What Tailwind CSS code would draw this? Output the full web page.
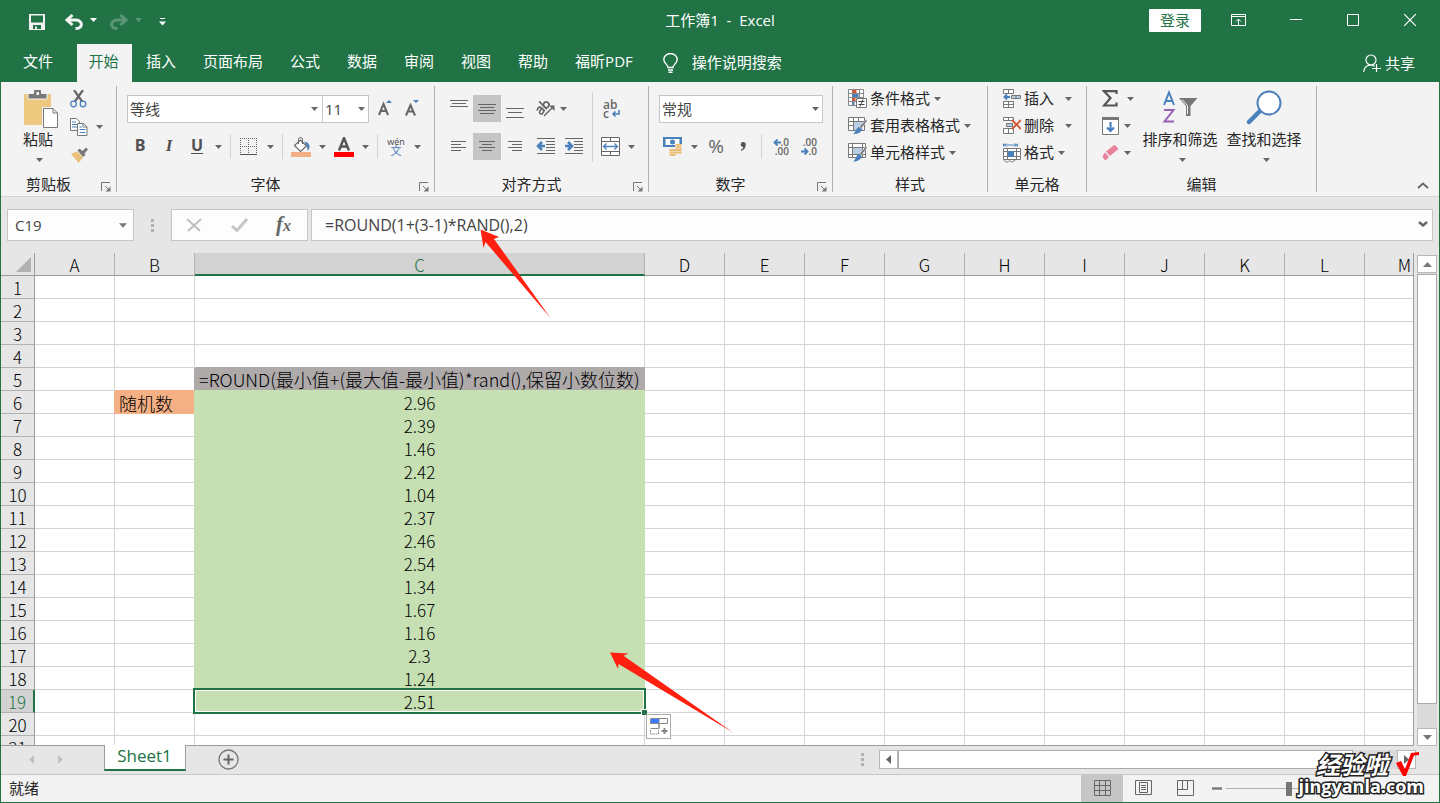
<!DOCTYPE html>
<html lang="zh-CN">
<head>
<meta charset="utf-8">
<title>工作簿1 - Excel</title>
<script src="https://cdn.jsdelivr.net/npm/@tailwindcss/browser@4"></script>
</head>
<body class="h-screen overflow-hidden bg-[#e6e6e6] font-['Open_Sans','Noto_Sans_CJK_SC',sans-serif] text-[15px] leading-5 text-[#262626]">

<svg class="hidden" aria-hidden="true">
  <symbol id="caret" viewBox="0 0 7 4"><path d="M0 0h7L3.500 4z" fill="currentColor"/></symbol>
  <symbol id="launch" viewBox="0 0 10 10"><path d="M.5 9V.5H9M4 4l4 4" fill="none" stroke="#777"/><path d="M9.500 4.500v5h-5z" fill="#777"/></symbol>
</svg>

<div class="flex h-full flex-col border-x border-b border-[#217346]">

  <!-- Title bar -->
  <header class="relative flex h-11 shrink-0 items-center bg-[#217346] text-white">
    <button class="ml-7 flex" aria-label="保存"><svg class="size-4" viewBox="0 0 16 16"><path d="M0 0h16v16H0zM2 1.500v7h12v-7zM4 11v4h2v-2.500h2V15h4v-4z" fill="#f2f2f2" fill-rule="evenodd"/></svg></button>
    <button class="ml-5 flex" aria-label="撤消"><svg class="h-4 w-[18px]" viewBox="0 0 18 16"><path d="M7.500 1L2 6l5.500 5M3 6h8c7 .5 7.500 8.500-.5 8.500" fill="none" stroke="#f2f2f2" stroke-width="3"/></svg></button>
    <svg class="mb-1 ml-[7px] h-[4px] w-[7px]"><use href="#caret"/></svg>
    <button class="ml-[13px] flex" aria-label="恢复"><svg class="h-4 w-[18px]" viewBox="0 0 18 16"><path d="M10.500 1L16 6l-5.500 5M15 6H7C0 6.500-.5 14.500 7.500 14.500" fill="none" stroke="#5a9677" stroke-width="3"/></svg></button>
    <svg class="mb-1 ml-[7px] h-[4px] w-[7px] text-[#5a9677]"><use href="#caret"/></svg>
    <button class="ml-[17px] flex" aria-label="自定义快速访问工具栏"><svg class="h-2 w-[7px]" viewBox="0 0 7 8"><path d="M1 .5h5" stroke="#fff" fill="none"/><path d="M0 3.500h7L3.500 7.500z" fill="#fff"/></svg></button>
    <h1 class="absolute inset-x-0 top-[10px] text-center whitespace-pre">工作簿1  -  Excel</h1>
    <div class="relative ml-auto flex items-center">
      <button class="h-[23px] w-[52px] rounded-[1px] bg-white text-[#217346] -mt-[3px] pb-[2px]">登录</button>
      <button class="ml-[30px] flex" aria-label="功能区显示选项"><svg class="h-3 w-[15px] -mt-[4px]" viewBox="0 0 15 12"><path d="M.5.5h14v11H.5zM0 2.500h15M7.500 11V5M5 7.500L7.500 5 10 7.500" fill="none" stroke="#fff"/></svg></button>
      <button class="ml-11 flex" aria-label="最小化"><svg class="-mt-[4px] h-3 w-3" viewBox="0 0 12 12"><path d="M0 5.500h12" stroke="#fff"/></svg></button>
      <button class="ml-[45px] flex" aria-label="最大化"><svg class="-mt-[4px] h-3 w-3" viewBox="0 0 12 12"><path d="M.5.5h11v11H.5z" fill="none" stroke="#fff"/></svg></button>
      <button class="mr-[23px] ml-[45px] flex" aria-label="关闭"><svg class="-mt-[4px] h-3 w-3" viewBox="0 0 12 12"><path d="M0 0l12 12M12 0L0 12" stroke="#fff" stroke-width="1.200"/></svg></button>
    </div>
  </header>

  <!-- Ribbon tabs -->
  <nav class="flex h-[38px] shrink-0 items-stretch bg-[#217346] text-white">
    <button class="w-[76px] pr-[2px] pb-[5px]">文件</button>
    <button class="w-[55px] bg-[#f3f3f3] pr-[2px] pb-[5px] text-[#217346]">开始</button>
    <button class="pr-[13px] pl-[14px] pb-[5px]">插入</button>
    <button class="pr-[13px] pl-[14px] pb-[5px]">页面布局</button>
    <button class="pr-[13px] pl-[14px] pb-[5px]">公式</button>
    <button class="pr-[13px] pl-[14px] pb-[5px]">数据</button>
    <button class="pr-[13px] pl-[14px] pb-[5px]">审阅</button>
    <button class="pr-[13px] pl-[14px] pb-[5px]">视图</button>
    <button class="pr-[13px] pl-[14px] pb-[5px]">帮助</button>
    <button class="pr-[13px] pl-[14px] pb-[5px]">福昕PDF</button>
    <button class="ml-[17px] flex items-center gap-[14px]">
      <svg class="h-5 w-[15px]" viewBox="0 0 15 20"><path d="M5 14.500c0-3-4.200-4-4.200-8a6.700 6 0 0113.400 0c0 4-4.200 5-4.200 8zM5 17h5M5.500 19.200h4" fill="none" stroke="#fff" stroke-width="1.400"/></svg>
      <span class="pb-[2px]">操作说明搜索</span>
    </button>
    <button class="mr-6 ml-auto flex items-center gap-1">
      <svg class="h-[19px] w-[18px]" viewBox="0 0 18 19"><circle cx="8" cy="6" r="5" fill="none" stroke="#fff" stroke-width="1.200"/><path d="M.6 18c.4-4 3-6.500 6.500-7 2 0 3.500.3 4.500 1.500M13.500 10v8M9 14.500h9" fill="none" stroke="#fff" stroke-width="1.200"/></svg>
      <span>共享</span>
    </button>
  </nav>

  <!-- Ribbon -->
  <div class="flex h-[115px] shrink-0 border-b border-[#d2d2d2] bg-[#f3f3f3] text-[#262626]">

    <section class="flex w-[115px] shrink-0 flex-col">
      <div class="flex pl-[19px]">
        <button class="flex w-[38px] flex-col items-center pt-[7px]">
          <svg class="h-10 w-[38px]" viewBox="0 0 38 40"><path d="M4 5h27v31H4z" fill="#edc87f"/><path d="M8 10V4.500h5.500V2q0-1.500 1.500-1.500h5q1.500 0 1.500 1.500v2.500H27V10z" fill="#777" stroke="#f3f3f3"/><path d="M16.500 3h2.500v3h-2.500z" fill="#f3f3f3"/><path d="M22 18h17v22H22z" fill="#f3f3f3"/><path d="M23.500 19.500H33l4.500 4.500v14.500h-14z" fill="#fff" stroke="#777"/><path d="M33 19.500V24h4.500" fill="none" stroke="#777"/></svg>
          <span class="w-[38px] pr-[2px] text-center leading-[21px]">粘贴</span>
          <svg class="mt-2 h-1 w-[7px] text-[#666]"><use href="#caret"/></svg>
        </button>
        <div class="flex flex-col gap-[10px] pt-2 pl-3">
          <button class="flex" aria-label="剪切"><svg class="size-[18px]" viewBox="0 0 18 18"><path d="M4 0l8.500 12M13 0L4.500 12" stroke="#666" stroke-width="2.200"/><circle cx="3.500" cy="14" r="2.800" fill="#f3f3f3" stroke="#4a80bb" stroke-width="1.300"/><circle cx="13" cy="14" r="2.800" fill="#f3f3f3" stroke="#4a80bb" stroke-width="1.300"/></svg></button>
          <button class="flex items-center gap-2" aria-label="复制"><svg class="size-[18px]" viewBox="0 0 18 18"><path d="M.5.5h6l3 3v9h-9z" fill="#fff" stroke="#777"/><path d="M2 4h4M2 6.500h5M2 9h5" stroke="#4a80bb"/><path d="M7.500 5.500h6l3.500 3.500v8.500H7.500z" fill="#fff" stroke="#777"/><path d="M13 5.500V9h4" fill="none" stroke="#777"/><path d="M9.500 9h2.500M9.500 11.500h6M9.500 14.500h6" stroke="#4a80bb"/></svg><svg class="h-1 w-[7px] text-[#666]"><use href="#caret"/></svg></button>
          <button class="flex" aria-label="格式刷"><svg class="size-[18px]" viewBox="0 0 18 18"><path d="M1 8l6-2.500 6 6L8.500 17C6 13.500 3.500 11 1 8z" fill="#edc07a"/><path d="M7.500 4.500l2-2 3 2.500L16 1.500 18 3.500 14.500 7.500l1 1.500-2.500 2z" fill="#777"/></svg></button>
        </div>
      </div>
      <div class="mt-auto flex h-[23px] items-center"><span class="flex-1 pb-[2px] text-center">剪贴板</span><button class="flex w-[20px] justify-center pt-1" aria-label="剪贴板选项"><svg class="size-[10px]"><use href="#launch"/></svg></button></div>
    </section>
    <div class="my-1 w-px shrink-0 bg-[#b1b1b1]"></div>

    <section class="flex w-[317px] shrink-0 flex-col pt-[13px]">
      <div class="flex h-7 items-center pl-[10px]">
        <div class="relative"><select aria-label="字体" class="h-7 w-[196px] appearance-none border border-[#c6c6c6] bg-white pl-0.5 text-[15px] text-[#444]"><option>等线</option></select><svg class="pointer-events-none absolute top-3 right-[5px] h-1 w-[7px] text-[#666]"><use href="#caret"/></svg></div>
        <div class="relative -ml-px"><select aria-label="字号" class="h-7 w-[47px] appearance-none border border-[#c6c6c6] bg-white pl-0.5 text-[15px] text-[#444]"><option>11</option></select><svg class="pointer-events-none absolute top-3 right-1 h-1 w-[7px] text-[#666]"><use href="#caret"/></svg></div>
        <button class="ml-[9px] flex" aria-label="增大字号"><svg class="h-[18px] w-[14px]" viewBox="0 0 14 18"><path d="M1 15L5.500 4 10 15M2.500 11h6" fill="none" stroke="#666" stroke-width="2"/><path d="M8 3h6l-3-3z" fill="#4a80bb"/></svg></button>
        <button class="ml-[13px] flex" aria-label="减小字号"><svg class="h-[18px] w-[14px]" viewBox="0 0 14 18"><path d="M1 15.500L5.500 5 10 15.500M2.500 11.500h6" fill="none" stroke="#666" stroke-width="2"/><path d="M8 0h6l-3 3z" fill="#4a80bb"/></svg></button>
      </div>
      <div class="mt-[10px] flex h-[27px] items-center pl-[10px] text-[#666]">
        <button class="w-[26px] pb-[3px] text-[16px] font-bold text-[#505050]">B</button>
        <button class="w-8 pb-[1px] font-['Liberation_Serif',serif] text-[17px] font-bold text-[#505050] italic">I</button>
        <button class="w-6 pb-[3px] text-[16px] font-bold text-[#505050] underline underline-offset-2">U</button>
        <button class="flex w-[18px] justify-center" aria-label="下划线选项"><svg class="h-1 w-[7px]"><use href="#caret"/></svg></button>
        <div class="mx-[3px] h-[25px] w-px bg-[#d2d2d2]"></div>
        <button class="flex w-[29px] justify-center" aria-label="边框"><svg class="size-[17px]" viewBox="0 0 17 17"><path d="M0 .5h17M0 8.500h17M.5 0v15M8.500 0v15M16.500 0v15" fill="none" stroke="#666" stroke-dasharray="1 1"/><path d="M0 16.500h17" stroke="#555"/></svg></button>
        <button class="flex w-[14px] justify-center" aria-label="边框选项"><svg class="h-1 w-[7px]"><use href="#caret"/></svg></button>
        <div class="mx-[5px] h-[25px] w-px bg-[#d2d2d2]"></div>
        <button class="flex w-[26px] justify-center" aria-label="填充颜色"><svg class="h-5 w-5" viewBox="0 0 20 20"><path d="M0 15h20v5H0z" fill="#f4b084"/><path d="M3.500 8.500L9.500 3l6 6-6 5.500z" fill="#fff" stroke="#666" stroke-width="1.200"/><path d="M7.500 7V2.500q0-2 2-2t2 2V7" fill="none" stroke="#666"/><path d="M13 4.500c4 0 6 3 5.500 6.500l-2 3c0-4-.5-6-3.500-9.500z" fill="#4a80bb"/></svg></button>
        <button class="flex w-4 justify-center" aria-label="填充颜色选项"><svg class="h-1 w-[7px]"><use href="#caret"/></svg></button>
        <button class="flex w-7 justify-center" aria-label="字体颜色"><svg class="h-5 w-5" viewBox="0 0 20 20"><path d="M0 15h20v5H0z" fill="#f00"/><path d="M5 13.500L10 1l5 12.500M6.500 9.500h7" fill="none" stroke="#555" stroke-width="2.400"/></svg></button>
        <button class="flex w-[14px] justify-center" aria-label="字体颜色选项"><svg class="h-1 w-[7px]"><use href="#caret"/></svg></button>
        <div class="mx-[5px] h-[25px] w-px bg-[#d2d2d2]"></div>
        <button class="flex w-[26px] flex-col items-center text-[9px] leading-[9px] text-[#444]"><span>wén</span><span class="text-[11px] leading-[10px] text-[#4a80bb]">文</span></button>
        <button class="flex w-4 justify-center" aria-label="拼音选项"><svg class="h-1 w-[7px]"><use href="#caret"/></svg></button>
      </div>
      <div class="mt-auto flex h-[23px] items-center"><span class="flex-1 pb-[2px] text-center">字体</span><button class="flex w-[20px] justify-center pt-1" aria-label="字体选项"><svg class="size-[10px]"><use href="#launch"/></svg></button></div>
    </section>
    <div class="my-1 w-px shrink-0 bg-[#b1b1b1]"></div>

    <section class="flex w-[213px] shrink-0 flex-col pt-[10px]">
      <div class="flex pl-[10px] text-[#666]">
        <div class="flex w-[143px] flex-col gap-[11px] pt-[3px]">
          <div class="flex h-[27px] items-center">
            <button aria-label="顶端对齐"><svg class="h-[27px] w-7" viewBox="0 0 28 27"><path d="M5 5.500h18M7 8.500h14M5 11.500h18" stroke="#666"/></svg></button>
            <button aria-label="垂直居中" class="bg-[#c5c5c5]"><svg class="h-[27px] w-7" viewBox="0 0 28 27"><path d="M5 9.500h18M7 12.500h14M5 15.500h18M7 18.500h14" stroke="#666"/></svg></button>
            <button aria-label="底端对齐"><svg class="h-[27px] w-7" viewBox="0 0 28 27"><path d="M5 13.500h18M7 17.500h14M5 22.500h18" stroke="#666"/></svg></button>
            <button class="ml-[3px] flex w-7 justify-center" aria-label="方向"><svg class="h-5 w-5 overflow-visible" viewBox="0 0 20 20"><g transform="rotate(-45 7 9)" fill="none" stroke="#666" stroke-width="1.700"><path d="M1 6.500c4-2 5-.5 5 1.500v4.500M6 8.500c-3 0-5 .5-5 2.300 0 2.500 4 2 5 0M9 1.500v11"/><circle cx="11.500" cy="9" r="2.800"/></g><path d="M8 17L17.500 7.500" stroke="#666" stroke-width="1.500"/><path d="M13 6.500h5.500V12z" fill="#666"/></svg></button>
            <button class="flex w-2" aria-label="方向选项"><svg class="h-1 w-[7px]"><use href="#caret"/></svg></button>
          </div>
          <div class="flex h-[27px] items-center">
            <button aria-label="左对齐"><svg class="h-[27px] w-7" viewBox="0 0 28 27"><path d="M6 8.500h15M6 11.500h10M6 14.500h15M6 17.500h10" stroke="#666"/></svg></button>
            <button aria-label="居中" class="bg-[#c5c5c5]"><svg class="h-[27px] w-7" viewBox="0 0 28 27"><path d="M6 8.500h16M9 11.500h10M6 14.500h16M9 17.500h10" stroke="#666"/></svg></button>
            <button aria-label="右对齐"><svg class="h-[27px] w-7" viewBox="0 0 28 27"><path d="M7 8.500h14M11 11.500h10M7 14.500h14M11 17.500h10" stroke="#666"/></svg></button>
            <button aria-label="减少缩进量" class="ml-[3px]"><svg class="h-[27px] w-7" viewBox="0 0 28 27"><path d="M5 5.500h18M14 8.500h9M14 11.500h9M14 14.500h9M14 17.500h9M5 20.500h18" stroke="#666"/><path d="M13 13H7M10 9l-4 4 4 4" stroke="#4a80bb" stroke-width="2.500" fill="none"/></svg></button>
            <button aria-label="增加缩进量"><svg class="h-[27px] w-7" viewBox="0 0 28 27"><path d="M5 5.500h18M14 8.500h9M14 11.500h9M14 14.500h9M14 17.500h9M5 20.500h18" stroke="#666"/><path d="M5 13h6M8 9l4 4-4 4" stroke="#4a80bb" stroke-width="2.500" fill="none"/></svg></button>
          </div>
        </div>
        <div class="mx-1 h-[70px] w-px bg-[#d2d2d2]"></div>
        <div class="flex flex-col gap-[11px] pt-[3px]">
          <button class="flex h-[27px] w-7 flex-col justify-center pl-[6px] text-left text-[12px] leading-[9px] font-semibold" aria-label="自动换行"><span>ab</span><span class="flex items-end gap-0.5">c<svg class="h-[8px] w-[9px]" viewBox="0 0 9 8"><path d="M8 0v4H2M4.500 1.500L2 4l2.500 2.500" fill="none" stroke="#4a80bb" stroke-width="1.600"/></svg></span></button>
          <div class="flex h-[27px] items-center">
            <button class="flex w-7 justify-center pr-[2px]" aria-label="合并后居中"><svg class="h-[19px] w-[19px]" viewBox="0 0 19 19"><path d="M.5.5h18v18H.5zM.5 4.500h18M.5 14.500h18M9.500.5v4M9.500 14.500v4" fill="#fff" stroke="#666"/><path d="M2.500 9.500h14M5.500 6.500l-3 3 3 3M13.500 6.500l3 3-3 3" fill="none" stroke="#4a80bb" stroke-width="1.300"/></svg></button>
            <button class="flex w-3 justify-center" aria-label="合并选项"><svg class="h-1 w-[7px]"><use href="#caret"/></svg></button>
          </div>
        </div>
      </div>
      <div class="mt-auto flex h-[23px] items-center"><span class="flex-1 pb-[2px] text-center">对齐方式</span><button class="flex w-[20px] justify-center pt-1" aria-label="对齐选项"><svg class="size-[10px]"><use href="#launch"/></svg></button></div>
    </section>
    <div class="my-1 w-px shrink-0 bg-[#b1b1b1]"></div>

    <section class="flex w-[183px] shrink-0 flex-col pt-[13px]">
      <div class="relative ml-[10px] w-[164px]"><select aria-label="数字格式" class="block h-7 w-full appearance-none border border-[#c6c6c6] bg-white pl-0.5 text-[15px] text-[#444]"><option>常规</option></select><svg class="pointer-events-none absolute top-3 right-1 h-1 w-[7px] text-[#666]"><use href="#caret"/></svg></div>
      <div class="mt-[10px] flex h-[27px] items-center pl-[10px] text-[#666]">
        <button class="flex w-7 justify-center" aria-label="会计数字格式"><svg class="h-[19px] w-5" viewBox="0 0 20 19"><path d="M0 0h19v10H0z" fill="#4a80bb"/><path d="M2.500 2h14v6h-14z" fill="#fff"/><circle cx="9.500" cy="5" r="2.500" fill="#4a80bb"/><path d="M12 7h7v10h-7zM6 12h7v7H6z" fill="#f3f3f3"/><path d="M12.500 8h6M12.500 10.500h6M12.500 13h6M12.500 15.500h6M6.500 13h6M6.500 15.500h6M6.500 18h6" stroke="#e8bd72" stroke-width="1.800"/></svg></button>
        <button class="flex w-[14px] justify-center" aria-label="会计格式选项"><svg class="h-1 w-[7px]"><use href="#caret"/></svg></button>
        <button class="w-[30px] pb-[2px] text-[19px]">%</button>
        <button class="flex w-6 justify-center" aria-label="千位分隔样式"><svg class="h-[9px] w-[6px]" viewBox="0 0 6 9"><path d="M5.700 3C5.700 6 4 8 1 9V7.500C2.500 7 3.300 6 3.200 5A2.500 2.500 0 115.700 3z" fill="#555"/></svg></button>
        <div class="mx-[6px] h-[25px] w-px bg-[#d2d2d2]"></div>
        <button class="flex w-[26px] flex-col items-end pr-[5px] text-[10px] leading-[9px] font-semibold"><span class="flex items-center"><svg class="h-[7px] w-2" viewBox="0 0 8 7"><path d="M8 3.500H2M4.500.5l-3 3 3 3" fill="none" stroke="#4a80bb" stroke-width="1.900"/></svg>.0</span><span>.00</span></button>
        <button class="flex w-[30px] flex-col items-end pr-[7px] text-[10px] leading-[9px] font-semibold"><span>.00</span><span class="flex items-center"><svg class="h-[7px] w-2" viewBox="0 0 8 7"><path d="M0 3.500h6M3.500.5l3 3-3 3" fill="none" stroke="#4a80bb" stroke-width="1.900"/></svg>.0</span></button>
      </div>
      <div class="mt-auto flex h-[23px] items-center"><span class="flex-1 pb-[2px] text-center">数字</span><button class="flex w-[20px] justify-center pt-1" aria-label="数字选项"><svg class="size-[10px]"><use href="#launch"/></svg></button></div>
    </section>
    <div class="my-1 w-px shrink-0 bg-[#b1b1b1]"></div>

    <section class="flex w-[154px] shrink-0 flex-col pt-[3px]">
      <button class="flex h-[27px] items-center pl-[15px]"><svg class="mr-[3px] h-[19px] w-[19px]" viewBox="0 0 19 19"><path d="M.5.5h15v16H.5zM.5 4.500h15M.5 8.500h15M.5 12.500h15M4.500.5v16M11.500.5v16" fill="#fff" stroke="#888"/><path d="M4.500 1h4v3h-4zM4.500 9h3v3h-3z" fill="#d35230"/><path d="M4.500 5h6v3h-6zM4.500 13h2v3h-2z" fill="#4a80bb"/><path d="M8.500 9.500h10v9h-10z" fill="#fff" stroke="#777"/><path d="M10.500 12.500h6M10.500 15.500h6M15 10.500l-3 7" stroke="#444"/></svg><span class="pb-px">条件格式</span><svg class="ml-1 h-1 w-[7px] text-[#666]"><use href="#caret"/></svg></button>
      <button class="flex h-[27px] items-center pl-[15px]"><svg class="mr-[3px] h-[19px] w-[19px]" viewBox="0 0 19 19"><path d="M.5 1.500h16v13H.5zM.5 5.500h16M.5 9.500h16M5.500 1.500v13M10.500 1.500v13" fill="#fff" stroke="#777"/><path d="M6 6h9v8H6z" fill="#b9cde4"/><path d="M18.500 3l-7 8 1.500 1.500L19 5z" fill="#666" stroke="#f3f3f3" stroke-width=".6"/><path d="M11 11l3 2.500c-2 4-5 4.500-9 4.500 3-2 3-6 6-7z" fill="#4a80bb"/></svg><span class="pb-px">套用表格格式</span><svg class="ml-1 h-1 w-[7px] text-[#666]"><use href="#caret"/></svg></button>
      <button class="flex h-[27px] items-center pl-[15px]"><svg class="mr-[3px] h-[19px] w-[19px]" viewBox="0 0 19 19"><path d="M.5.500h17v14H.5zM.5 4.500h17M.5 11.500h17M4.500.5v14M14.500.5v14" fill="#fff" stroke="#777"/><path d="M5 5h9v6H5z" fill="#b9cde4"/><path d="M18.500 3l-7 8 1.500 1.500L19 5z" fill="#666" stroke="#f3f3f3" stroke-width=".6"/><path d="M11 11l3 2.500c-2 4-5 5-9 5 3-2 3-6.500 6-7.500z" fill="#4a80bb"/></svg><span class="pb-px">单元格样式</span><svg class="ml-1 h-1 w-[7px] text-[#666]"><use href="#caret"/></svg></button>
      <div class="mt-auto h-[23px] text-center leading-[22px]">样式</div>
    </section>
    <div class="my-1 w-px shrink-0 bg-[#b1b1b1]"></div>

    <section class="flex w-[98px] shrink-0 flex-col pt-[3px]">
      <button class="flex h-[27px] items-center pl-[15px]"><svg class="mr-[3px] h-[19px] w-[18px]" viewBox="0 0 18 19"><path d="M.5.5h10v4H.5zM5.500.5v4M.5 12.500h10v6H.5zM5.500 12.500v6M.5 15.500h10" fill="#fff" stroke="#777"/><path d="M8.500 6.500h9v3h-9zM13 6.500v3" fill="#b9cde4" stroke="#777"/><path d="M7 8H2M4 5.500L1.500 8 4 10.500" fill="none" stroke="#4a80bb" stroke-width="1.800"/></svg><span class="pb-px">插入</span><svg class="ml-[11px] h-1 w-[7px] text-[#666]"><use href="#caret"/></svg></button>
      <button class="flex h-[27px] items-center pl-[15px]"><svg class="mr-[3px] h-[19px] w-[18px]" viewBox="0 0 18 19"><path d="M.5 1.500h10v3H.5zM5.500 1.500v3M.5 12.500h10v5H.5zM5.500 12.500v5" fill="#fff" stroke="#777"/><path d="M3.500 7.500h6v3h-6z" fill="#b9cde4" stroke="#777"/><path d="M9 4l9 9M18 4l-9 9" stroke="#d35230" stroke-width="1.800"/></svg><span class="pb-px">删除</span><svg class="ml-[11px] h-1 w-[7px] text-[#666]"><use href="#caret"/></svg></button>
      <button class="flex h-[27px] items-center pl-[15px]"><svg class="mr-[3px] h-[20px] w-[18px]" viewBox="0 0 18 20"><path d="M.5.5v3M14.500.5v3M1 2h13M3.500.5L1.500 2l2 1.500M11.500.5l2 1.500-2 1.500" stroke="#4a80bb" fill="none"/><path d="M.5 5.500h17v11H.5zM.5 8.500h17M.5 13.500h17M4.500 5.500v11M13.500 5.500v11" fill="#fff" stroke="#777"/><path d="M5 8h6v6H5z" fill="#4a80bb"/><path d="M1 17c2 3 4 2 5 1s3 3 6-1" fill="none" stroke="#777"/></svg><span class="pb-px">格式</span><svg class="ml-1 h-1 w-[7px] text-[#666]"><use href="#caret"/></svg></button>
      <div class="mt-auto h-[23px] text-center leading-[22px]">单元格</div>
    </section>
    <div class="my-1 w-px shrink-0 bg-[#b1b1b1]"></div>

    <section class="flex w-[229px] shrink-0 flex-col">
      <div class="flex">
        <div class="flex w-[51px] flex-col pt-[3px] pl-[15px]">
          <button class="flex h-[27px] items-center gap-[9px]" aria-label="自动求和"><svg class="h-[17px] w-4" viewBox="0 0 16 17"><path d="M14.500 4V1.200H2L8.500 8 2 15.500h12.500V12.500" fill="none" stroke="#555" stroke-width="2.200"/></svg><svg class="h-1 w-[7px] text-[#666]"><use href="#caret"/></svg></button>
          <button class="flex h-[27px] items-center gap-[5px]" aria-label="填充"><svg class="h-[18px] w-[17px]" viewBox="0 0 17 18"><path d="M.5.5h16v17H.5z" fill="#fff" stroke="#777"/><path d="M0 0h17v3H0z" fill="#777"/><path d="M8.500 5v9M5 10.500l3.500 3.500 3.500-3.500" fill="none" stroke="#4a80bb" stroke-width="2.200"/></svg><svg class="h-1 w-[7px] text-[#666]"><use href="#caret"/></svg></button>
          <button class="flex h-[27px] items-center gap-[5px]" aria-label="清除"><svg class="h-4 w-[17px]" viewBox="0 0 17 16"><path d="M11.500.5q1-.8 2 .2l2 2q1 1 0 2L8 11 4 6.500z" fill="#e8839b"/><path d="M3 7.500l4 4.500-2.500 2.500q-1 1-2 0l-1.500-1.700q-1-1 0-2.300z" fill="#e8839b"/></svg><svg class="h-1 w-[7px] text-[#666]"><use href="#caret"/></svg></button>
        </div>
        <button class="flex w-[84px] flex-col items-center pt-[8px]">
          <svg class="h-9 w-9" viewBox="0 0 36 36"><path d="M2 15L7 2.500 12 15M3.500 11h7" fill="none" stroke="#4a80bb" stroke-width="2"/><path d="M2 20h9.500L2.500 31.500H12" fill="none" stroke="#9a5fb5" stroke-width="2"/><path d="M17 8h18.500l-7 8v10h-4.500V16z" fill="#777"/><path d="M20 9.500l5.500 6.200v8.500" fill="none" stroke="#f3f3f3"/></svg>
          <span class="mt-[3px] whitespace-nowrap leading-[21px]">排序和筛选</span>
          <svg class="mt-2 ml-1 h-1 w-[7px] text-[#666]"><use href="#caret"/></svg>
        </button>
        <button class="flex w-[84px] flex-col items-center pt-[8px]">
          <svg class="h-9 w-9" viewBox="0 0 36 36"><path d="M15 20L3 32" stroke="#4a80bb" stroke-width="4.500" stroke-linecap="round"/><circle cx="23" cy="13" r="11.500" fill="#fff" stroke="#4a80bb" stroke-width="2"/></svg>
          <span class="mt-[3px] whitespace-nowrap leading-[21px]">查找和选择</span>
          <svg class="mt-2 ml-1 h-1 w-[7px] text-[#666]"><use href="#caret"/></svg>
        </button>
      </div>
      <div class="mt-auto h-[23px] text-center leading-[22px]">编辑</div>
    </section>
    <div class="my-1 w-px shrink-0 bg-[#b1b1b1]"></div>
    <button class="mt-auto mr-[10px] mb-[7px] ml-auto flex" aria-label="折叠功能区"><svg class="h-[7px] w-3" viewBox="0 0 12 7"><path d="M1 6l5-4.500L11 6" fill="none" stroke="#666" stroke-width="1.800"/></svg></button>
  </div>

  <!-- Formula bar -->
  <div class="flex h-14 shrink-0 items-center pr-[6px] pl-[6px]">
    <div class="relative shrink-0"><input aria-label="名称框" value="C19" class="block h-8 w-[127px] border border-[#c6c6c6] bg-[#fdfdfd] pl-[7px] text-[15px] text-[#444]"><svg class="pointer-events-none absolute top-[14px] right-[7px] h-[5px] w-[8px] text-[#777]"><use href="#caret"/></svg></div>
    <svg class="mx-[17px] h-[13px] w-[3px] shrink-0" viewBox="0 0 3 13"><path d="M0 0h3v3H0zM0 5h3v3H0zM0 10h3v3H0z" fill="#b1b1b1"/></svg>
    <div class="flex h-8 w-[137px] shrink-0 items-center border border-[#c6c6c6] bg-[#fdfdfd]">
      <button class="ml-[14px] flex" aria-label="取消"><svg class="h-[14px] w-4" viewBox="0 0 16 14"><path d="M1 1l13 12M15 1L2 13" stroke="#bfbfbf" stroke-width="2"/></svg></button>
      <button class="ml-[29px] flex" aria-label="输入"><svg class="h-[14px] w-[17px]" viewBox="0 0 17 14"><path d="M1 8l5 4.500L16 1" fill="none" stroke="#c6c6c6" stroke-width="3"/></svg></button>
      <button class="ml-[28px] font-['Liberation_Serif',serif] text-[21px] font-bold text-[#666] italic" aria-label="插入函数">f<span class="text-[16px]">x</span></button>
    </div>
    <div class="relative ml-[3px] flex-1"><input aria-label="编辑栏" value="=ROUND(1+(3-1)*RAND(),2)" class="block h-8 w-full border border-[#c6c6c6] bg-[#fdfdfd] pl-[13px] text-[16px] text-[#444]"><svg class="pointer-events-none absolute top-3 right-[5px] h-[6px] w-[10px]" viewBox="0 0 10 6"><path d="M1 1l4 3.500L9 1" fill="none" stroke="#666" stroke-width="2.400"/></svg></div>
  </div>

  <!-- Worksheet -->
  <main class="flex min-h-0 flex-1 font-['Noto_Sans_CJK_SC',sans-serif] font-light text-black">
    <div class="min-w-0 flex-1 overflow-hidden border-r border-b border-[#9c9c9c]">
      <table class="w-[1444px] table-fixed border-separate border-spacing-0 bg-white">
        <colgroup><col class="w-[34px]"><col class="w-20"><col class="w-20"><col class="w-[450px]"><col span="10" class="w-20"></colgroup>
        <thead><tr id="heads"></tr></thead>
        <tbody id="rows"></tbody>
      </table>
    </div>
    <div class="mr-[2px] ml-[3px] flex w-5 flex-col bg-[#dadada]">
      <div class="h-[2px] bg-[#e6e6e6]"></div>
      <button class="flex h-[18px] items-center justify-center border border-[#b9b9b9] bg-white" aria-label="向上滚动"><svg class="h-[5px] w-[9px]" viewBox="0 0 9 5"><path d="M0 5h9L4.500 0z" fill="#777"/></svg></button>
      <div class="mt-px h-[430px] border border-[#ababab] bg-white"></div>
      <button class="mt-auto flex h-[18px] items-center justify-center border border-[#b9b9b9] bg-white" aria-label="向下滚动"><svg class="h-[5px] w-[9px]" viewBox="0 0 9 5"><path d="M0 0h9L4.500 5z" fill="#777"/></svg></button>
    </div>
  </main>

  <!-- Sheet tabs -->
  <div class="flex h-7 shrink-0 items-center pb-px">
    <button class="ml-[28px] flex" aria-label="上一个工作表"><svg class="h-[9px] w-[5px]" viewBox="0 0 5 9"><path d="M5 0v9L0 4.500z" fill="#c0c0c0"/></svg></button>
    <button class="ml-6 flex" aria-label="下一个工作表"><svg class="h-[9px] w-[5px]" viewBox="0 0 5 9"><path d="M0 0v9l5-4.500z" fill="#c0c0c0"/></svg></button>
    <button class="relative z-10 -mt-px ml-[41px] h-[26px] w-[82px] self-start border-x border-b-2 border-x-[#9c9c9c] border-b-[#217346] bg-white pr-px pb-[2px] text-[17px] text-[#217346]">Sheet1</button>
    <button class="ml-8 flex" aria-label="新工作表"><svg class="size-[21px]" viewBox="0 0 21 21"><circle cx="10.500" cy="10.500" r="9.500" fill="none" stroke="#777" stroke-width="1.300"/><path d="M10.500 5.500v10M5.500 10.500h10" stroke="#666" stroke-width="2"/></svg></button>
    <div class="ml-auto flex w-[578px] items-center">
      <svg class="mr-[15px] h-[13px] w-[3px]" viewBox="0 0 3 13"><path d="M0 0h3v3H0zM0 5h3v3H0zM0 10h3v3H0z" fill="#b1b1b1"/></svg>
      <button class="flex h-[19px] w-[19px] items-center justify-center border border-[#b9b9b9] bg-white" aria-label="向左滚动"><svg class="h-[9px] w-[5px]" viewBox="0 0 5 9"><path d="M5 0v9L0 4.500z" fill="#666"/></svg></button>
      <div class="flex h-[19px] flex-1 bg-[#dadada]"><div class="w-[455px] border border-[#ababab] bg-white"></div></div>
      <button class="mr-[23px] flex h-[19px] w-[19px] items-center justify-center border border-[#b9b9b9] bg-white" aria-label="向右滚动"><svg class="h-[9px] w-[5px]" viewBox="0 0 5 9"><path d="M0 0v9l5-4.500z" fill="#666"/></svg></button>
    </div>
  </div>

  <!-- Status bar -->
  <footer class="relative flex h-7 shrink-0 items-center border-t border-[#c6c6c6] bg-[#f3f3f3] pl-2">
    <span class="pb-[2px]">就绪</span>
    <button class="ml-auto flex h-[27px] w-[42px] items-center justify-center bg-[#c6c6c6] pb-px" aria-label="普通视图"><svg class="size-[17px]" viewBox="0 0 17 17"><path d="M.5.5h16v15H.5zM.5 5.500h16M.5 10.500h16M5.500.5v15M11.500.5v15" fill="none" stroke="#666"/></svg></button>
    <button class="flex w-[42px] justify-center pr-px pb-px" aria-label="页面布局视图"><svg class="h-4 w-[17px]" viewBox="0 0 17 16"><path d="M.5.5h16v14H.5zM4.500 2.500h8v10h-8zM6 5.500h5M6 7.500h5M6 9.500h5" fill="none" stroke="#666"/></svg></button>
    <button class="flex w-[42px] justify-center pr-px pb-px" aria-label="分页预览"><svg class="h-4 w-[17px]" viewBox="0 0 17 16"><path d="M.5.5h16v15H.5zM.5 9.500h10V.5M5.500.5v9" fill="none" stroke="#666"/></svg></button>
    <button class="ml-[5px] flex pb-px" aria-label="缩小"><svg class="h-[3px] w-[10px]" viewBox="0 0 10 3"><path d="M0 1.500h10" stroke="#777" stroke-width="2.400"/></svg></button>
    <input type="range" aria-label="缩放" value="50" class="mr-[87px] ml-1 h-[14px] w-[126px] appearance-none bg-transparent bg-[linear-gradient(#b1b1b1,#b1b1b1)] bg-[length:100%_1px] bg-center bg-no-repeat [&::-webkit-slider-thumb]:h-[14px] [&::-webkit-slider-thumb]:w-[6px] [&::-webkit-slider-thumb]:appearance-none [&::-webkit-slider-thumb]:bg-[#777]">
  </footer>
</div>

<!-- Annotation arrows -->
<svg class="pointer-events-none absolute top-0 left-0 h-[803px] w-[1440px]" viewBox="0 0 1440 803" fill="#ff2010">
  <path d="M480.500 229.500L499 237l-5 2L550.500 318 485.500 242l-2 6z"/>
  <path d="M610 652.500l18.500 1-5 2.200L733 732.500 618.500 664l-.5 5z"/>
</svg>

<!-- Site mark -->
<div class="pointer-events-none absolute right-4 bottom-[7px] flex flex-col items-end font-['Noto_Sans_CJK_SC',sans-serif] font-bold text-white [-webkit-text-stroke:3px_#222] [paint-order:stroke_fill]">
  <div class="flex items-center gap-2 pr-1"><span class="text-[24px] leading-[24px] italic">经验啦</span><svg class="h-6 w-6" viewBox="0 0 24 24"><path d="M0 11l5-2 4 8L15 1l8-1v3l-5 .5L10 24H7z" fill="#f00"/></svg></div>
  <span class="font-['Open_Sans',sans-serif] text-[18px] leading-[20px]">jingyanla.com</span>
</div>

<script>
  const cols = 'ABCDEFGHIJKLM'.split('');
  const values = ['2.96','2.39','1.46','2.42','1.04','2.37','2.46','2.54','1.34','1.67','1.16','2.3','1.24','2.51'];
  const corner = '<td class="h-[23px] border-r border-b border-[#9c9c9c] bg-[#e6e6e6] p-0"><svg class="ml-auto mr-[3px] mt-[1px] size-[15px]" viewBox="0 0 15 15"><path d="M15 0v15H0z" fill="#b1b1b1"/></svg></td>';
  document.getElementById('heads').innerHTML = corner + cols.map(c => c === 'C'
    ? '<th scope="col" class="h-[23px] border-r border-b-2 border-r-[#b1b1b1] border-b-[#217346] bg-[#d2d2d2] p-0 pt-[2px] text-[17px] leading-[19px] font-light text-[#217346]">C</th>'
    : `<th scope="col" class="h-[23px] border-r border-b border-r-[#b1b1b1] border-b-[#9c9c9c] bg-[#e6e6e6] p-0 pt-[2px] text-[17px] leading-5 font-light">${c}</th>`).join('');

  const selection = `<div class="absolute -top-[2px] -left-[2px] -right-[2px] -bottom-[2px] border-2 border-[#217346]"><div class="h-full border border-white"></div></div>
    <div class="absolute -right-[3px] -bottom-[3px] size-[6px] border-t border-l border-white bg-[#217346]"></div>
    <button aria-label="自动填充选项" class="absolute top-[24px] left-[451px] z-10 flex size-[25px] items-center justify-center border border-[#ababab] bg-white"><svg class="h-[17px] w-[18px]" viewBox="0 0 18 17"><path d="M.5.5h17v5H.5zM.5 5.500h8.500v5H.5M9 .5v10" fill="#fff" stroke="#888"/><path d="M1 1h8v4H1z" fill="#3a7bff"/><path d="M.5 12v4h8v-4" fill="none" stroke="#888" stroke-dasharray="2 1"/><path d="M14.500 10v6M11.500 13h6" stroke="#888" stroke-width="2"/></svg></button>`;
  const cell = (r, c) => {
    if (c === 'A' && r === 6) return '<td class="border-r border-b border-r-[#f4b084] border-b-[#d4d4d4] p-0"></td>';
    if (c === 'B' && r === 5) return '<td class="border-r border-b border-r-[#aeaaaa] border-b-[#f4b084] p-0"></td>';
    if (c === 'B' && r === 6) return '<td class="border-r border-[#c6e0b4] bg-[#f4b084] p-0 pl-1 text-[18px] leading-[22px]">随机数</td>';
    if (c === 'B' && r > 6 && r < 20) return '<td class="border-r border-b border-r-[#c6e0b4] border-b-[#d4d4d4] p-0"></td>';
    if (c === 'C' && r === 4) return '<td class="border-r border-b border-r-[#d4d4d4] border-b-[#aeaaaa] p-0"></td>';
    if (c === 'C' && r === 5) return '<td class="border-r border-b border-r-[#aeaaaa] border-b-[#c6e0b4] bg-[#aeaaaa] p-0 pl-1 text-[18px] leading-[22px] whitespace-nowrap">=ROUND(最小值+(最大值-最小值)*rand(),保留小数位数)</td>';
    if (c === 'C' && r >= 6 && r <= 18) return `<td class="border-r border-b border-[#c6e0b4] bg-[#c6e0b4] p-0 pt-px text-center text-[17px] leading-[20px]">${values[r - 6]}</td>`;
    if (c === 'C' && r === 19) return `<td class="relative border-r border-b border-[#c6e0b4] bg-[#c6e0b4] p-0 pt-px text-center text-[17px] leading-[20px]">${values[13]}${selection}</td>`;
    return '<td class="border-r border-b border-[#d4d4d4] p-0"></td>';
  };
  let html = '';
  for (let r = 1; r <= 21; r++) {
    html += '<tr>' + (r === 19
      ? '<th scope="row" class="h-[23px] border-r-2 border-b border-r-[#217346] border-b-[#b1b1b1] bg-[#d2d2d2] p-0 pt-px text-[17px] leading-5 font-light text-[#217346]">19</th>'
      : `<th scope="row" class="h-[23px] border-r border-b border-r-[#9c9c9c] border-b-[#b1b1b1] bg-[#e6e6e6] p-0 pt-px text-[17px] leading-5 font-light">${r}</th>`)
      + cols.map(c => cell(r, c)).join('') + '</tr>';
  }
  document.getElementById('rows').innerHTML = html;
</script>
</body>
</html>
